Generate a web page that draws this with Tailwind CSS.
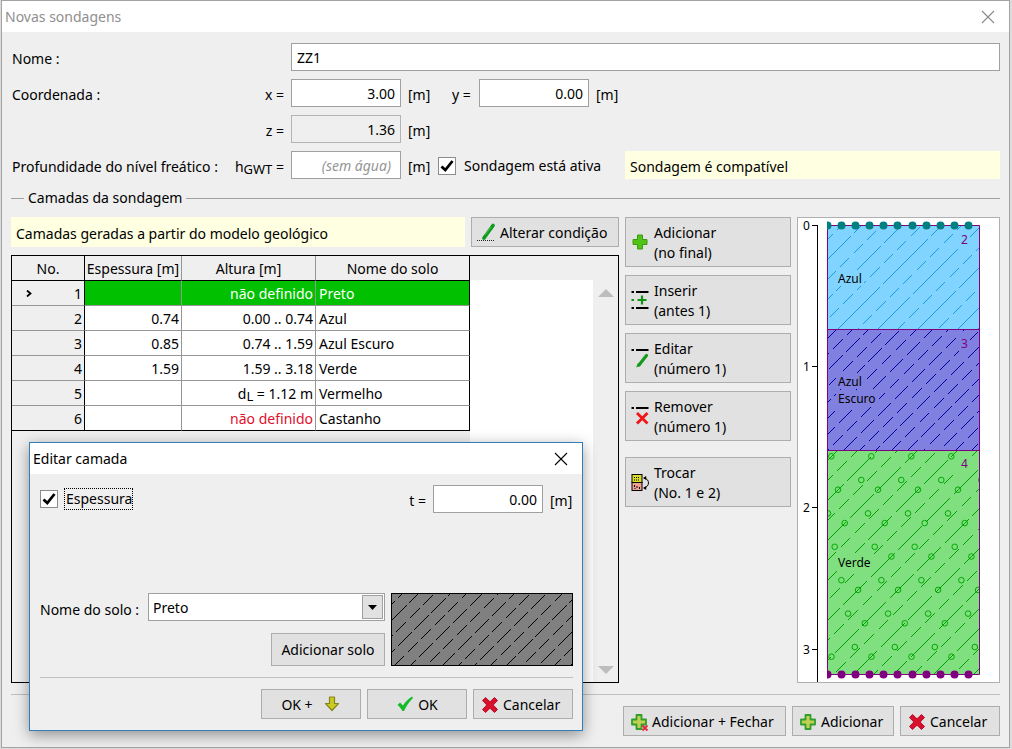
<!DOCTYPE html>
<html lang="pt">
<head>
<meta charset="utf-8">
<title>Novas sondagens</title>
<script src="https://cdn.jsdelivr.net/npm/@tailwindcss/browser@4"></script>
</head>
<body class="bg-[#dcdcdc] font-['Noto_Sans','Open_Sans',sans-serif] text-sm leading-5 text-black">
<svg class="hidden">
  <symbol id="cross" viewBox="0 0 18 18"><path d="M4.5 1.5 9 5.8l4.5-4.3 3 3L12.200 9l4.300 4.500-3 3L9 12.200l-4.500 4.300-3-3L5.800 9 1.500 4.500Z" fill="#d9102c" stroke="#b3122a" stroke-linejoin="round"/></symbol>
  <symbol id="plus" viewBox="0 0 18 18"><path d="M6.500 2h5v4.500H16v5h-4.500V16h-5v-4.500H2v-5h4.500Z" fill="#c3cf52" stroke="#2f9e2c" stroke-width="1.800" stroke-linejoin="round"/></symbol>
  <symbol id="tick" viewBox="0 0 18 18"><path d="M3.500 9.500 7.300 13 14.500 4" fill="none" stroke="#000" stroke-width="2.800"/></symbol>
</svg>

<main class="relative h-screen pl-px pr-0.5 pb-px">
<section class="flex h-full flex-col border border-[#a3a3a3] bg-[#efefef]" aria-label="Novas sondagens">
  <header class="flex h-[31px] shrink-0 items-center justify-between bg-white pl-[3px] pr-[10px]">
    <h1 class="text-[#8f8f8f]">Novas sondagens</h1>
    <button aria-label="Fechar" class="p-1"><svg class="size-[14px]" viewBox="0 0 14 14"><path d="M1 1 13 13M13 1 1 13" stroke="#8a8a8a" stroke-width="1.100"/></svg></button>
  </header>

  <div class="flex flex-1 flex-col px-[9px] py-[11px]">
    <div class="flex flex-col gap-2">
      <div class="flex items-center">
        <label for="nome" class="w-[280px] pt-1 pl-px">Nome :</label>
        <input id="nome" value="ZZ1" class="h-7 min-w-0 flex-1 border border-[#a0a0a0] bg-white px-[5px]">
      </div>
      <div class="flex items-center">
        <div class="flex w-[280px] justify-between pt-1 pr-[7px] pl-px"><span>Coordenada :</span><label for="x">x =</label></div>
        <input id="x" value="3.00" class="h-7 w-[110px] border border-[#a0a0a0] bg-white px-[5px] text-right">
        <span class="w-[51px] pt-1 pl-[7px]">[m]</span>
        <label for="y" class="w-[27px] pt-1">y =</label>
        <input id="y" value="0.00" class="h-7 w-[110px] border border-[#a0a0a0] bg-white px-[5px] text-right">
        <span class="pt-1 pl-[7px]">[m]</span>
      </div>
      <div class="flex items-center">
        <label for="z" class="w-[280px] pt-1 pr-[7px] text-right">z =</label>
        <input id="z" value="1.36" readonly class="h-7 w-[110px] border border-[#b4b4b4] bg-[#efefef] px-[5px] text-right">
        <span class="pt-1 pl-[7px]">[m]</span>
      </div>
      <div class="flex items-center">
        <div class="flex w-[280px] justify-between pt-1 pr-[7px] pl-px whitespace-nowrap"><span>Profundidade do nível freático :</span><label for="h">h<sub class="bottom-[-2px] text-[13px]">GWT</sub> =</label></div>
        <input id="h" placeholder="(sem água)" class="h-7 w-[110px] border border-[#a0a0a0] bg-white px-[9px] text-right placeholder:text-[#969696] placeholder:italic">
        <span class="w-[37px] pt-1 pl-[7px]">[m]</span>
        <label class="flex w-[187px] items-center gap-2 pt-0.5 whitespace-nowrap">
          <span class="grid size-[18px]"><input type="checkbox" checked class="peer size-[18px] appearance-none border border-[#8c8c8c] bg-white [grid-area:1/1]"><svg class="pointer-events-none invisible size-[18px] peer-checked:visible [grid-area:1/1]"><use href="#tick"/></svg></span>
          Sondagem está ativa
        </label>
        <p class="flex h-7 flex-1 items-center bg-[#ffffe1] pt-1 pl-[5px]">Sondagem é compatível</p>
      </div>
    </div>

    <h2 class="mt-[9px] flex items-center gap-1"><span class="h-px w-[13px] bg-[#a0a0a0]"></span>Camadas da sondagem<span class="h-px flex-1 bg-[#a0a0a0]"></span></h2>

    <div class="mt-[9px] flex flex-1 gap-1.5">
      <div class="flex min-w-0 flex-1 flex-col gap-2">
        <div class="flex gap-1.5">
          <p class="flex h-[30px] flex-1 items-center bg-[#ffffe1] pt-1 pl-[5px]">Camadas geradas a partir do modelo geológico</p>
          <button class="flex h-[30px] w-[148px] items-center gap-1 border border-[#adadad] bg-[#e1e1e1] pt-0.5 pl-1 whitespace-nowrap">
            <svg class="size-5 shrink-0" viewBox="0 0 20 20"><path d="M17 2.500 8 15" stroke="#0f9a1e" stroke-width="3.600" stroke-linecap="round"/><path d="M15 4 9 12" stroke="#4dc34d"/><path d="M8.500 12.500 6 16.500 10 14.500Z" fill="#0f9a1e"/><path d="M1 17.500H18" stroke="#222" stroke-dasharray="1 1"/></svg>
            Alterar condição
          </button>
        </div>
        <div class="flex flex-1 border border-black bg-[#efefef]">
          <div class="w-[458px] shrink-0">
          <table class="w-full table-fixed border-separate border-spacing-0 whitespace-nowrap [&_td]:h-[25px] [&_td]:border-r [&_td]:border-b [&_td]:border-[#969696] [&_td]:bg-white [&_td]:px-0.5 [&_td]:pt-px [&_td:first-child]:border-r-black [&_td:first-child]:bg-[#efefef] [&_td:last-child]:border-r-black [&_td:last-child]:pl-[3px] [&_tr:last-child_td]:border-b-black [&_th]:h-[25px] [&_th]:border-r [&_th]:border-b [&_th]:border-r-[#969696] [&_th]:border-b-black [&_th]:pt-px [&_th]:font-normal [&_th:first-child]:border-r-black [&_th:last-child]:border-r-black">
            <colgroup><col class="w-[73px]"><col class="w-[97px]"><col class="w-[134px]"><col></colgroup>
            <thead><tr><th>No.</th><th>Espessura [m]</th><th>Altura [m]</th><th>Nome do solo</th></tr></thead>
            <tbody class="text-right [&_td:last-child]:text-left">
              <tr class="text-white [&_td:not(:first-child)]:bg-[#00c000]!"><td class="text-black"><span class="flex items-center justify-between pl-3"><svg class="size-[7px]" viewBox="0 0 7 7"><path d="M1 0.500 4.500 3.500 1 6.500" fill="none" stroke="#000" stroke-width="1.800"/></svg>1</span></td><td></td><td>não definido</td><td>Preto</td></tr>
              <tr><td>2</td><td>0.74</td><td>0.00 .. 0.74</td><td>Azul</td></tr>
              <tr><td>3</td><td>0.85</td><td>0.74 .. 1.59</td><td>Azul Escuro</td></tr>
              <tr><td>4</td><td>1.59</td><td>1.59 .. 3.18</td><td>Verde</td></tr>
              <tr><td>5</td><td></td><td>d<sub class="bottom-[-2px] text-[13px]">L</sub> = 1.12 m</td><td>Vermelho</td></tr>
              <tr><td>6</td><td></td><td class="text-[#e0102c]">não definido</td><td>Castanho</td></tr>
            </tbody>
          </table>
          </div>
          <div class="mt-6 flex-1 bg-white"></div>
          <div class="flex w-[25px] flex-col items-center justify-between pt-[33px] pb-2">
            <svg class="h-2 w-4" viewBox="0 0 16 8"><path d="M0 8 8 0 16 8Z" fill="#bdbdbd"/></svg>
            <svg class="h-2 w-4" viewBox="0 0 16 8"><path d="M0 0 8 8 16 0Z" fill="#bdbdbd"/></svg>
          </div>
        </div>
      </div>

      <div class="flex w-[166px] flex-col gap-2">
        <button class="flex h-[50px] items-center gap-1 border border-[#adadad] bg-[#e1e1e1] pt-0.5 pl-1 text-left">
          <svg class="size-5 shrink-0" viewBox="0 0 20 20"><path d="M7.500 2h5v4.500H17v5h-4.500V16h-5v-4.500H3v-5h4.500Z" fill="#4fc414" stroke="#3b9b10" stroke-linejoin="round"/></svg>
          <span>Adicionar<br>(no final)</span></button>
        <button class="flex h-[50px] items-center gap-1 border border-[#adadad] bg-[#e1e1e1] pt-0.5 pl-1 text-left">
          <svg class="size-5 shrink-0" viewBox="0 0 20 20"><path d="M1.500 1h2.500M6 1h12.500M1.500 17h2.500M6 17h12.500" stroke="#000" stroke-width="2"/><path d="M1.500 9h2.500M7.500 9h9M12 4.500v9" stroke="#149414" stroke-width="2.200"/></svg>
          <span>Inserir<br>(antes 1)</span></button>
        <button class="flex h-[50px] items-center gap-1 border border-[#adadad] bg-[#e1e1e1] pt-0.5 pl-1 text-left">
          <svg class="size-5 shrink-0" viewBox="0 0 20 20"><path d="M1.500 1h2.500M6 1h12.500" stroke="#000" stroke-width="2"/><path d="M16.500 6.500 9 16" stroke="#159a1c" stroke-width="3.200" stroke-linecap="round"/><path d="M8 14 6 18.500 11 16.500Z" fill="#159a1c"/></svg>
          <span>Editar<br>(número 1)</span></button>
        <button class="flex h-[50px] items-center gap-1 border border-[#adadad] bg-[#e1e1e1] pt-0.5 pl-1 text-left">
          <svg class="size-5 shrink-0" viewBox="0 0 20 20"><path d="M1.500 1h2.500M6 1h12.500" stroke="#000" stroke-width="2"/><path d="M7 6 17.500 16.500M17.500 6 7 16.500" stroke="#f01414" stroke-width="2.800"/></svg>
          <span>Remover<br>(número 1)</span></button>
        <button class="mt-2 flex h-[50px] items-center gap-1 border border-[#adadad] bg-[#e1e1e1] pt-0.5 pl-1 text-left">
          <svg class="size-5 shrink-0" viewBox="0 0 20 20"><rect x="2" y="1.500" width="10" height="8" fill="#d8dc28" stroke="#000"/><rect x="2" y="9.500" width="10" height="8" fill="#f0a090" stroke="#000"/><path d="M4 4.500h6M4 7h6" stroke="#000" stroke-dasharray="1 1"/><path d="M4.500 12v2M9.500 14v2M7 13v2M4.500 15.500h1" stroke="#000"/><path d="M14 5c6 1 6 8.500 0 10" fill="none" stroke="#000"/><path d="M13 5l3.200-2v4ZM13 15l3.200-2v4Z"/></svg>
          <span>Trocar<br>(No. 1 e 2)</span></button>
      </div>

      <div class="w-[203px] border border-[#b0b0b0] bg-white">
        <svg class="block h-[464px] w-[201px] font-['Noto_Sans',sans-serif] text-xs" viewBox="798 218 201 464" role="img" aria-label="Perfil da sondagem">
          <defs>
            <clipPath id="col"><rect x="827" y="220" width="153" height="460"/></clipPath>
            <clipPath id="cAzul"><rect x="827" y="225" width="153" height="104"/></clipPath>
            <clipPath id="cEscuro"><rect x="827" y="329" width="153" height="121"/></clipPath>
            <clipPath id="cVerde"><rect x="827" y="450" width="153" height="224"/></clipPath>
          </defs>
          <rect x="827" y="225" width="153" height="104" fill="#80d4ff"/>
          <rect x="827" y="329" width="153" height="121" fill="#8080e0"/>
          <rect x="827" y="450" width="153" height="224" fill="#80e080"/>
          <g id="hAzul" clip-path="url(#cAzul)" stroke="#1c9ce0"></g>
          <g id="hEscuro" clip-path="url(#cEscuro)" stroke="#0000a0"></g>
          <g id="hVerde" clip-path="url(#cVerde)" stroke="#00a000"></g>
          <g id="pebbles" clip-path="url(#cVerde)" fill="none" stroke="#00a800"></g>
          <path d="M836 270h28v16h-28ZM956 231h14v16h-14Z" fill="#80d4ff"/>
          <path d="M836 373h28v16h-28ZM836 390h43v17h-43ZM956 335h14v16h-14Z" fill="#8080e0"/>
          <path d="M836 553h38v18h-38ZM956 455h14v16h-14Z" fill="#80e080"/>
          <path d="M827.500 225.500H979.500V674.500H827.500ZM827 329.500H980M827 450.500H980" fill="none" stroke="#800080"/>
          <path d="M817.500 225V682M812 225.500h6M812 366.500h6M812 507.500h6M812 649.500h6" stroke="#000"/>
          <g clip-path="url(#col)" fill="none" stroke-width="8" stroke-linecap="round">
            <path stroke="#008080" d="M827.500 225.500h0M841.500 225.500h0M855.500 225.500h0M869.500 225.500h0M883.500 225.500h0M897.500 225.500h0M912.500 225.500h0M926.500 225.500h0M940.500 225.500h0M954.500 225.500h0M968.500 225.500h0"/>
            <path stroke="#800080" d="M827.500 674.500h0M841.500 674.500h0M855.500 674.500h0M869.500 674.500h0M883.500 674.500h0M897.500 674.500h0M912.500 674.500h0M926.500 674.500h0M940.500 674.500h0M954.500 674.500h0M968.500 674.500h0"/>
          </g>
          <g fill="#000"><text x="803" y="230">0</text><text x="803" y="371">1</text><text x="803" y="512">2</text><text x="803" y="654">3</text>
          <text x="838" y="283">Azul</text><text x="838" y="386">Azul</text><text x="838" y="403">Escuro</text><text x="838" y="567">Verde</text></g>
          <g fill="#800080"><text x="961" y="244">2</text><text x="961" y="348">3</text><text x="961" y="468">4</text></g>
        </svg>
      </div>
    </div>

    <footer class="mt-[11px] flex justify-end gap-1.5 border-t border-[#c0c0c0] pt-[11px]">
      <button class="flex h-[30px] w-[163px] items-center gap-1 border border-[#adadad] bg-[#e1e1e1] pt-0.5 pl-1.5 whitespace-nowrap">
        <svg class="size-[18px] shrink-0 overflow-visible" viewBox="0 0 18 18"><use href="#plus" width="18" height="18"/><path d="M12.500 12.500 17.500 17.500M17.500 12.500 12.500 17.500" stroke="#e02838" stroke-width="1.800"/></svg>Adicionar + Fechar</button>
      <button class="flex h-[30px] w-[102px] items-center gap-1 border border-[#adadad] bg-[#e1e1e1] pt-0.5 pl-1.5"><svg class="size-[18px] shrink-0"><use href="#plus"/></svg>Adicionar</button>
      <button class="flex h-[30px] w-[100px] items-center gap-1 border border-[#adadad] bg-[#e1e1e1] pt-0.5 pl-[7px]"><svg class="size-[18px] shrink-0"><use href="#cross"/></svg>Cancelar</button>
    </footer>
  </div>
</section>

<section role="dialog" aria-label="Editar camada" class="absolute top-[442px] left-[29px] w-[554px] border border-[#2f7fbf] bg-[#efefef] shadow-[0_4px_14px_rgba(0,0,0,0.4)]">
  <header class="flex h-[31px] items-center justify-between bg-white pr-[10px] pl-[3px]">
    <h2>Editar camada</h2>
    <button aria-label="Fechar" class="p-1"><svg class="size-[14px]" viewBox="0 0 14 14"><path d="M1 1 13 13M13 1 1 13" stroke="#000" stroke-width="1.100"/></svg></button>
  </header>
  <div class="px-[9px] py-[11px] pl-[10px]">
    <div class="flex items-center">
      <label class="flex flex-1 items-center gap-1.5">
        <span class="grid size-[18px]"><input type="checkbox" checked class="peer size-[18px] appearance-none border border-[#8c8c8c] bg-white [grid-area:1/1]"><svg class="pointer-events-none invisible size-[18px] peer-checked:visible [grid-area:1/1]"><use href="#tick"/></svg></span>
        <span class="border border-dotted border-black pl-px">Espessura</span>
      </label>
      <label for="t" class="pt-1 pr-[7px]">t =</label>
      <input id="t" value="0.00" class="h-7 w-[110px] border border-[#a0a0a0] bg-white px-[5px] text-right">
      <span class="w-[30px] pt-1 pl-[7px]">[m]</span>
    </div>
    <div class="mt-20 flex gap-1.5">
      <div class="flex flex-1 flex-col items-end gap-3">
        <div class="flex w-full items-center">
          <label for="solo" class="w-[108px] pt-1.5 whitespace-nowrap">Nome do solo :</label>
          <div class="relative flex-1">
            <select id="solo" class="block h-7 w-full appearance-none border border-[#a0a0a0] bg-white px-1 pt-px"><option>Preto</option></select>
            <span class="pointer-events-none absolute top-0.5 right-0.5 grid h-6 w-[21px] place-items-center border border-[#a0a0a0] bg-[#e1e1e1]"><svg class="h-[5px] w-[9px]" viewBox="0 0 9 5"><path d="M0 0H9L4.500 5Z"/></svg></span>
          </div>
        </div>
        <button class="h-[33px] w-[114px] border border-[#adadad] bg-[#e1e1e1] whitespace-nowrap">Adicionar solo</button>
      </div>
      <svg class="h-[73px] w-[182px] border border-black bg-[#808080]" role="img" aria-label="Padrão do solo Preto"><g id="hPreto" stroke="#000"></g></svg>
    </div>
    <footer class="mt-[11px] flex justify-end gap-1.5 border-t border-[#c0c0c0] pt-[11px]">
      <button class="flex h-[30px] w-[100px] items-center justify-center gap-[10px] border border-[#adadad] bg-[#e1e1e1] pt-0.5">OK + <svg class="size-[18px]" viewBox="0 0 18 18"><path d="M6.500 1h5v6.500H15.500L9 14.500 2.500 7.500h4Z" fill="#c8cc20" stroke="#8a8420" stroke-width="1.200" stroke-linejoin="round"/></svg></button>
      <button class="flex h-[30px] w-[100px] items-center justify-center gap-1 border border-[#adadad] bg-[#e1e1e1] pt-0.5"><svg class="size-[18px]" viewBox="0 0 18 18"><path d="M1.500 9 4 6.500 7 9.500C9 6 12 3 16 0.500L17 2C13 6 10.500 9.500 8 15H6.500C5 12.500 3.500 10.500 1.500 9Z" fill="#14bb28"/></svg>OK</button>
      <button class="flex h-[30px] w-[100px] items-center gap-1 border border-[#adadad] bg-[#e1e1e1] pt-0.5 pl-[7px]"><svg class="size-[18px] shrink-0"><use href="#cross"/></svg>Cancelar</button>
    </footer>
  </div>
</section>
</main>
<script>
  const add = (layer, tag, attrs) => {
    const el = document.createElementNS('http://www.w3.org/2000/svg', tag);
    for (const key in attrs) el.setAttribute(key, attrs[key]);
    layer.append(el);
  };

  // Diagonal soil hatch: parallel 45° lines, alternating between two dash styles.
  function hatch(id, x, y, w, h, sum, step, dashes) {
    const layer = document.getElementById(id);
    let k = Math.ceil((x + y - sum) / step);
    for (; sum + k * step < x + y + w + h; k++) {
      const s = sum + k * step;
      const odd = Math.abs(k % 2);
      add(layer, 'path', {
        d: `M${s - y - h} ${y + h}L${s - y} ${y}`,
        'stroke-dasharray': dashes[odd],
        'stroke-dashoffset': (k * 7) % 23,
        'shape-rendering': 'crispEdges',
      });
    }
  }
  hatch('hAzul', 827, 225, 153, 104, 1087, 20, ['64 4', '13 6']);
  hatch('hEscuro', 827, 329, 153, 121, 1294, 16, ['19 5', '14 6']);
  hatch('hVerde', 827, 450, 153, 224, 1328, 20, ['34 5', '14 6']);
  hatch('hPreto', 0, 0, 182, 73, 122, 16, ['20 4', '14 5']);

  // Pebbles of the "Verde" hatch: two staggered series, each row shifted along the diagonal.
  const layer = document.getElementById('pebbles');
  for (const [x0, y0] of [[831.3, 456.3], [821.3, 480]]) {
    for (let row = 0; y0 + row * 33.4 < 672; row++) {
      for (let x = x0 + row * 6.7 - 80; x < 984; x += 40) {
        if (x > 824) add(layer, 'circle', { cx: x, cy: y0 + row * 33.4, r: 2.8 });
      }
    }
  }
</script>
</body>
</html>
